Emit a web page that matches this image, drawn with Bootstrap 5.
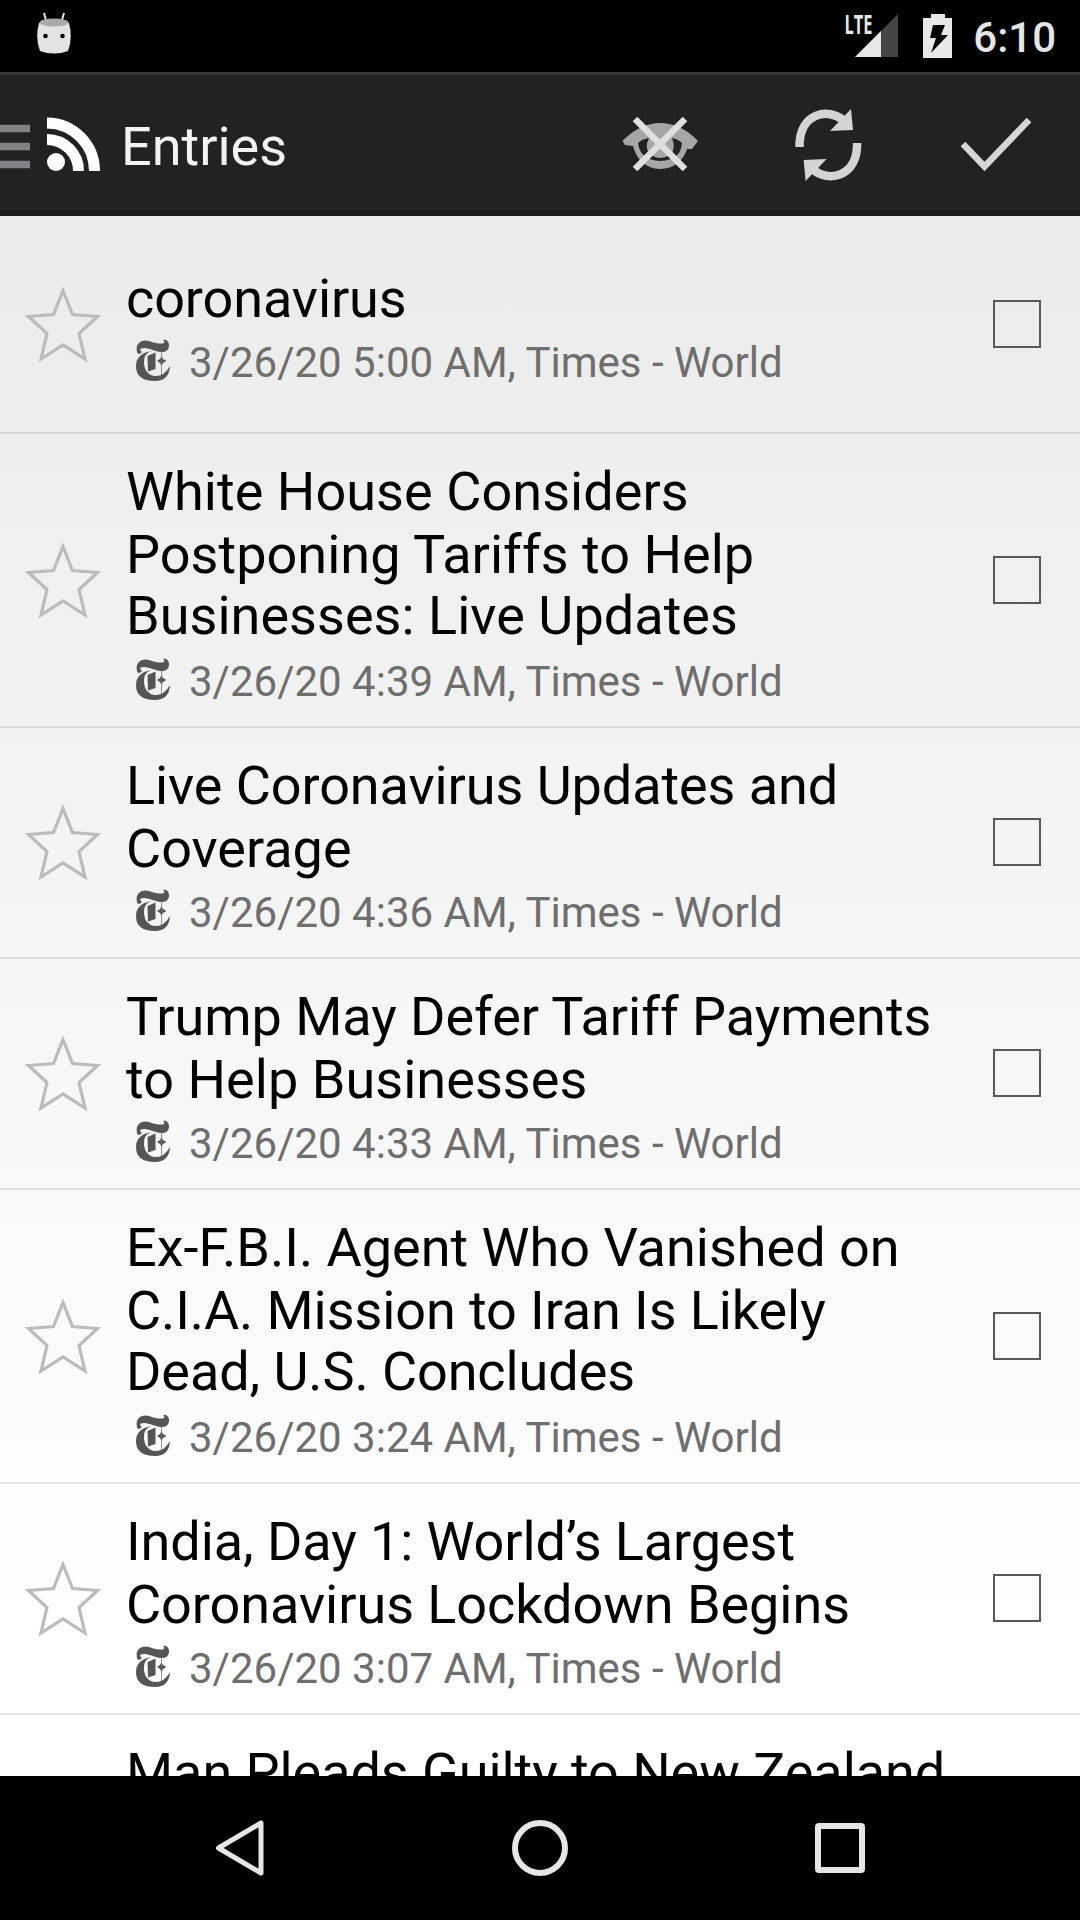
<!DOCTYPE html>
<html lang="en">
<head>
<meta charset="utf-8">
<meta name="viewport" content="width=device-width, initial-scale=1">
<title>Entries</title>
<link href="https://cdn.jsdelivr.net/npm/bootstrap@5.3.0/dist/css/bootstrap.min.css" rel="stylesheet">
<style>
html,body{height:100%}
body{font-family:Roboto,"Liberation Sans",sans-serif;background:#000;overflow:hidden}
.screen{width:1080px;height:1920px}
.statusbar{height:72px;padding:0 24px 0 36px;color:#e6e6e6}
.clock{font-size:42px;line-height:72px;font-weight:500;padding-top:4px}
.battery{margin:0 20px 0 24px}
.actionbar{height:144px;background:#222;border-top:3px solid #373737;border-bottom:6px solid #1b1b1b}
.bar-title{font-size:54px;color:#f3f3f3;line-height:1;margin-left:19px;padding-top:9px}
.action{width:168px;height:135px}
.entries{background:linear-gradient(#ebebeb,#fff 92%);height:1560px;overflow:hidden}
.entry{border-bottom:2px solid rgba(0,0,0,.1);height:231px;flex:none}
.entry.one{height:218px}
.entry.three{height:294px}
.entry.last{height:61px;border:0}
.two .star,.two .tick{margin-bottom:1px}
.star{width:126px;flex:none}
.copy{padding-top:26px}
.one .copy{padding-top:51px}
.headline{font-size:54px;line-height:63px;color:#000}
.three .line:nth-child(3){line-height:59px;padding-bottom:4px}
.meta{font-size:42px;line-height:50px;color:#6e6e6e;margin-top:8px}
.times{margin:0 18px 6px 10px}
.tick{width:48px;height:48px;border:2px solid #595959;margin-right:39px}
.navkeys{height:144px}
.navkeys svg{margin:0 120px}
</style>
<script src="https://cdn.jsdelivr.net/npm/bootstrap@5.3.0/dist/js/bootstrap.bundle.min.js"></script>
</head>
<body>
<svg width="0" height="0" class="position-absolute">
<symbol id="star" viewBox="0 0 80 76"><path d="M40 4.500 L49.500 28.500 L74.500 30.500 L56 47.500 L62 73 L40 59 L18 73 L24 47.500 L5.500 30.500 L30.500 28.500Z" fill="none" stroke="#bbb" stroke-width="3.2"/></symbol>
</svg>
<div class="screen d-flex flex-column">
  <header class="statusbar d-flex align-items-center bg-black">
    <svg width="36" height="54" viewBox="0 0 36 54"><path d="M8 4l3 11M28 4l-3 11" stroke="#e6e6e6" stroke-width="2"/><path d="M3 14Q18 6 33 14Q37 29 32 42Q18 47 4 42Q-1 29 3 14Z" fill="#e4e4e4"/><ellipse cx="18" cy="13.500" rx="14.500" ry="4" fill="#aaa"/><circle cx="9.500" cy="27" r="2.300"/><circle cx="26.500" cy="27" r="2.300"/></svg>
    <svg class="ms-auto" width="55" height="72" viewBox="844 0 55 72"><path d="M898 14V57H855Z" fill="#454545"/><path d="M881 31V57H855Z" fill="#e6e6e6"/><text x="844.500" y="33.500" font-family="Open Sans" font-weight="700" font-size="26" textLength="28" lengthAdjust="spacingAndGlyphs" fill="#e6e6e6">LTE</text></svg>
    <svg class="battery" width="30" height="72" viewBox="0 0 30 72"><path d="M0 18H8V14H22V18H29V58H0Z" fill="#e8e8e8"/><path d="M10 25H22L18 35H25L8 53L13 38H7Z"/></svg>
    <span class="clock">6:10</span>
  </header>
  <nav class="actionbar d-flex align-items-center">
    <svg width="102" height="135" viewBox="0 75 102 135"><path d="M0 128.500H30M0 146.500H30M0 164.500H30" stroke="#818285" stroke-width="7.500"/><circle cx="56" cy="162" r="9" fill="#fff"/><path d="M47 139.500A31.500 31.500 0 0 1 78.500 171M47 123A48 48 0 0 1 94.500 171" stroke="#fff" stroke-width="11" fill="none"/></svg>
    <span class="bar-title">Entries</span>
    <div class="d-flex ms-auto">
      <svg class="action" viewBox="576 75 168 135"><path d="M622.500 141Q640 123 660 123Q681 123 698 141L692 149L687 149Q681 168 660 169Q639 168 633 146L625 145Z" fill="#a6a6a6"/><path d="M638 143Q642 139 649 138Q644 148 650 154Q660 162 671 154Q676 148 672 138Q678 139 682 143Q681 160 660 161Q640 160 638 143Z" fill="#222"/><path d="M635 119L685 169M685 119L635 169" stroke="#e0e0e0" stroke-width="6.500"/></svg>
      <svg class="action" viewBox="744 75 168 135"><g id="half"><path d="M799.500 147C799 112 829 108 843 120" fill="none" stroke="#d4d4d4" stroke-width="8.500"/><path d="M851 109L853 130L830 131Z" fill="#d4d4d4"/></g><use href="#half" transform="rotate(180 828.300 145)"/></svg>
      <svg class="action" viewBox="912 75 168 135"><path d="M963 144L984.500 166.500L1029 120" fill="none" stroke="#d6d6d6" stroke-width="6.500"/></svg>
    </div>
  </nav>
  <main class="entries d-flex flex-column" id="entries"></main>
  <footer class="navkeys d-flex align-items-center justify-content-center bg-black">
    <svg width="60" height="60" viewBox="0 0 60 60" fill="none" stroke="#e6e6e6"><path d="M51 5V55L8.500 30Z" stroke-width="5" stroke-linejoin="round"/></svg>
    <svg width="60" height="60" viewBox="0 0 60 60" fill="none" stroke="#e6e6e6"><circle cx="30" cy="30" r="25" stroke-width="6"/></svg>
    <svg width="60" height="60" viewBox="0 0 60 60" fill="none" stroke="#e6e6e6"><rect x="8" y="8" width="44" height="44" rx="1" stroke-width="6"/></svg>
  </footer>
</div>
<script>
// Each headline line is [text, tracking in px].
const rows=[
["one","5:00",[["coronavirus",-.1]]],
["three","4:39",[["White House Considers",.06],["Postponing Tariffs to Help",.03],["Businesses: Live Updates",.04]]],
["two","4:36",[["Live Coronavirus Updates and",-.08],["Coverage",0]]],
["two","4:33",[["Trump May Defer Tariff Payments",-.04],["to Help Businesses",.05]]],
["three","3:24",[["Ex-F.B.I. Agent Who Vanished on",0],["C.I.A. Mission to Iran Is Likely",-.09],["Dead, U.S. Concludes",-.09]]],
["two","3:07",[["India, Day 1: World’s Largest",-.08],["Coronavirus Lockdown Begins",-.05]]],
["last","",[["Man Pleads Guilty to New Zealand",-.06]]]];
const logo=`<svg class="times" width="35" height="42" viewBox="0 0 35 42"><path d="M1 13C-1 4 6 0 13 2C21 5 26 5 28 4Q29 2 27 1C34-1 36 12 27 13C18 13 11 7 5 9.500Q3 11 6 13Q2 17 1 13Z" fill="#555"/><path d="M15 12Q7 15 8 25Q9 35 18 37Q28 38 34 27Q33 42 19 42Q0 42 0 27Q0 15 15 12Z" fill="#555"/><path d="M11.500 17L19.500 13.500V30L12 32.500ZM25.500 17L27 20L30.500 22L27 24L25.500 27L24 24L21 22L24 20Z" fill="#555"/><path d="M25.500 12V36" stroke="#777" stroke-width=".8"/></svg>`;
const tail=t=>`<div class="meta d-flex align-items-center">${logo}<span>3/26/20 ${t} AM, Times - World</span></div>`;
document.getElementById("entries").innerHTML=rows.map(([n,t,h])=>`<article class="entry ${n} d-flex align-items-center">${t?`<svg class="star" height="76"><use href="#star" x="23" width="80" height="76"/></svg>`:`<div class="star"></div>`}<div class="copy flex-grow-1 align-self-start"><div class="headline">${h.map(([l,s])=>`<div class="line text-nowrap" style="letter-spacing:${s}px">${l}</div>`).join("")}</div>${t?tail(t):""}</div>${t?`<div class="tick"></div>`:""}</article>`).join("");
</script>
</body>
</html>
